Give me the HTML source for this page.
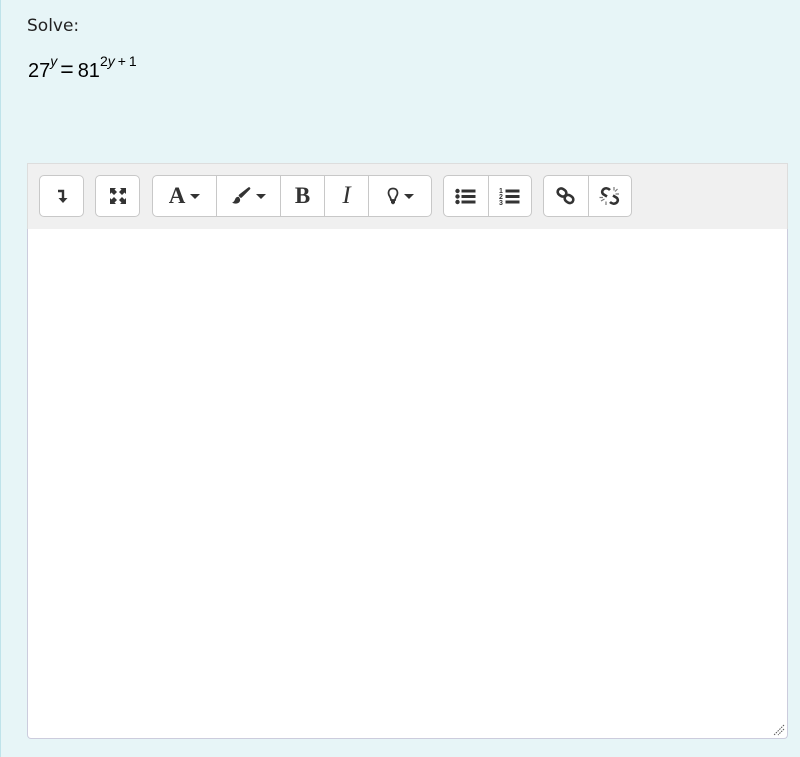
<!DOCTYPE html>
<html><head><meta charset="utf-8"><style>
html,body{margin:0;padding:0}
body{width:800px;height:757px;background:#e7f5f7;position:relative;overflow:hidden;font-family:"Liberation Sans",sans-serif;color:#1d2125}
.lb{position:absolute;left:0;top:0;width:1px;height:757px;background:#bfe3ea}
.t1{position:absolute;left:27px;top:16px;font-family:"DejaVu Sans","Liberation Sans",sans-serif;font-size:17px;color:#222}
.eq{position:absolute;left:28px;top:56px;font-size:20px;color:#000;white-space:nowrap}
.eq sup{font-size:14px;position:relative;top:-3px}
.eq .op{display:inline-block;margin:0 4px 0 3px;font-size:23px}
.eq .pl{display:inline-block;margin:0 3px}
.tb{position:absolute;left:27px;top:163px;width:759px;height:65px;background:#f0f0f0;border:1px solid #ddd;border-bottom:1px solid #ccc}
.ed{position:absolute;left:27px;top:229px;width:759px;height:509px;background:#fff;border:1px solid #ccd;border-top:none;border-radius:0 0 4px 4px}
.g{position:absolute;top:175px;height:40px;background:#fff;border:1px solid #c8c8c8;border-radius:5px;display:flex;box-sizing:content-box}
.b{height:40px;display:flex;align-items:center;justify-content:center;border-left:1px solid #c8c8c8;box-sizing:border-box}
.b:first-child{border-left:none}
.car{display:inline-block;width:0;height:0;border-left:5px solid transparent;border-right:5px solid transparent;border-top:5px solid #333;margin-left:5px}
.serif{font-family:"Liberation Serif",serif;font-size:23px;color:#333}
</style></head><body>
<div class="lb"></div>
<div class="t1">Solve:</div>
<div class="eq">27<sup><i>y</i></sup><span class="op">=</span>81<sup>2<i>y</i><span class="pl">+</span>1</sup></div>
<div class="tb"></div>
<div class="ed"><svg style="position:absolute;right:2px;bottom:2px" width="12" height="12"><path d="M11 1L1 11M11 5L5 11" stroke="#555" stroke-width="1" stroke-dasharray="1.5 1"/></svg></div>

<div class="g" style="left:39px;width:43px"><div class="b" style="width:43px">
<svg width="12" height="16"><path d="M2 3H7V11" stroke="#333" stroke-width="2.4" fill="none"/><path d="M2.5 10H11.5L7 15Z" fill="#333"/></svg></div></div>

<div class="g" style="left:95px;width:43px"><div class="b" style="width:43px">
<svg width="18" height="18" fill="#333"><path d="M1 1H7L5.5 2.5L8 5L5 8L2.5 5.5L1 7Z"/><path d="M17 1V7L15.5 5.5L13 8L10 5L12.5 2.5L11 1Z"/><path d="M1 17V11L2.5 12.5L5 10L8 13L5.5 15.5L7 17Z"/><path d="M17 17H11L12.5 15.5L10 13L13 10L15.5 12.5L17 11Z"/></svg></div></div>

<div class="g" style="left:152px;width:278px">
<div class="b" style="width:63px"><span class="serif" style="font-weight:bold">A</span><span class="car"></span></div>
<div class="b" style="width:64px"><svg width="20" height="18"><path d="M18 1.5L10 9.5L9 8.5Z" fill="#333" stroke="#333" stroke-width="2.6" stroke-linejoin="round"/><path d="M8 10C3 9 5 15 1 15.5C5 18 10 16 9 12Z" fill="#333"/></svg><span class="car"></span></div>
<div class="b" style="width:44px"><span class="serif" style="font-weight:bold">B</span></div>
<div class="b" style="width:44px"><span class="serif" style="font-style:italic;font-size:25px">I</span></div>
<div class="b" style="width:63px"><svg width="12" height="18"><path d="M6 1.5C2.5 1.5 1.5 4 1.5 6C1.5 9 4 10 4 13H8C8 10 10.5 9 10.5 6C10.5 4 9.5 1.5 6 1.5Z" fill="none" stroke="#333" stroke-width="1.8"/><rect x="4" y="13" width="4" height="3" fill="#333"/><path d="M6 17.5L4 16H8Z" fill="#333"/></svg><span class="car"></span></div>
</div>

<div class="g" style="left:443px;width:87px">
<div class="b" style="width:44px"><svg width="22" height="17" fill="#333"><circle cx="2.5" cy="3" r="2.2"/><circle cx="2.5" cy="8.5" r="2.2"/><circle cx="2.5" cy="14" r="2.2"/><rect x="6.5" y="1.5" width="14" height="3"/><rect x="6.5" y="7" width="14" height="3"/><rect x="6.5" y="12.5" width="14" height="3"/></svg></div>
<div class="b" style="width:43px"><svg width="22" height="19" fill="#333"><text x="0" y="6" font-size="7" font-weight="bold" font-family="Liberation Sans">1</text><text x="0" y="12" font-size="7" font-weight="bold" font-family="Liberation Sans">2</text><text x="0" y="18" font-size="7" font-weight="bold" font-family="Liberation Sans">3</text><rect x="6.5" y="2.5" width="14" height="3"/><rect x="6.5" y="8" width="14" height="3"/><rect x="6.5" y="13.5" width="14" height="3"/></svg></div>
</div>

<div class="g" style="left:543px;width:87px">
<div class="b" style="width:44px"><svg width="20" height="18" fill="none" stroke="#333" stroke-width="2.6"><rect x="1.5" y="2" width="9" height="7" rx="3.5" transform="rotate(35 6 5.5)"/><rect x="8.5" y="8.5" width="9" height="7" rx="3.5" transform="rotate(35 13 12)"/></svg></div>
<div class="b" style="width:43px"><svg width="22" height="20" fill="none"><path d="M11 4C7 0 1 4 4 8L8 10.5M11 16C15 20 21 16 18 12L14 9.5" stroke="#333" stroke-width="2.6"/><path d="M15 1V4.5M18.5 3L16 5.5M20 8H16.5M2 15L5.5 13M7 19V15.5M0.5 11.5H4" stroke="#777" stroke-width="1.2"/></svg></div>
</div>
</body></html>
